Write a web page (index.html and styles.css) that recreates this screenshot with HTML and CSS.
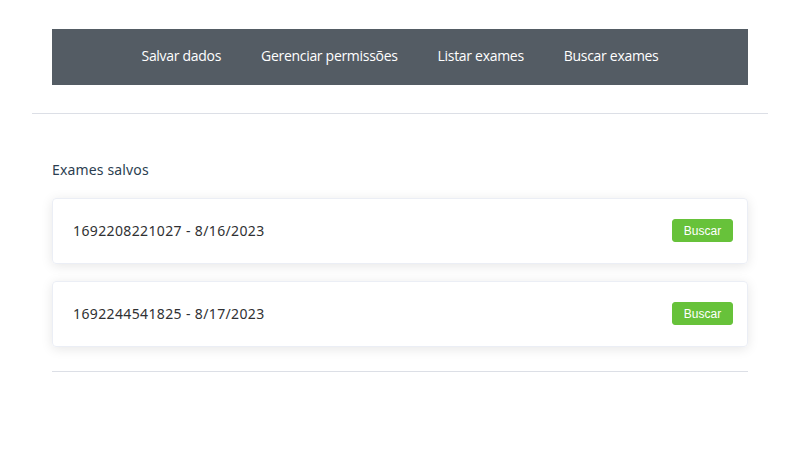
FILE: index.html
```html
<!DOCTYPE html>
<html lang="pt">
<head>
<meta charset="utf-8">
<title>Exames</title>
<link rel="stylesheet" href="styles.css">
</head>
<body>
<div class="page">
  <header class="header">
    <nav class="nav">
      <a class="nav-item">Salvar dados</a>
      <a class="nav-item">Gerenciar permissões</a>
      <a class="nav-item">Listar exames</a>
      <a class="nav-item">Buscar exames</a>
    </nav>
  </header>
  <hr class="divider">
  <main class="main">
    <h2 class="title">Exames salvos</h2>
    <div class="list">
      <div class="card">
        <span class="card-text">1692208221027 - 8/16/2023</span>
        <button class="btn">Buscar</button>
      </div>
      <div class="card">
        <span class="card-text">1692244541825 - 8/17/2023</span>
        <button class="btn">Buscar</button>
      </div>
    </div>
    <hr class="divider-bottom">
  </main>
</div>
</body>
</html>
```
FILE: styles.css
```css
html, body {
  margin: 0;
  padding: 0;
  background: #ffffff;
}
body {
  font-family: "Noto Sans", sans-serif;
  color: #303133;
}
.page {
  padding: 29px 32px 0;
}
.header {
  padding: 0 20px;
}
.nav {
  height: 56px;
  box-sizing: border-box;
  padding-bottom: 3px;
  background: #545c64;
  display: flex;
  justify-content: center;
  align-items: center;
  gap: 40px;
}
.nav-item {
  color: #ffffff;
  font-family: "Open Sans", sans-serif;
  font-size: 14px;
  letter-spacing: -0.3px;
}
.divider {
  border: 0;
  border-top: 1px solid #dcdfe6;
  margin: 28px 0 0;
}
.main {
  padding: 0 20px;
}
.title {
  margin: 46px 0 0;
  font-size: 14px;
  font-weight: 400;
  color: #2c3e50;
  line-height: 20px;
  letter-spacing: 0.15px;
}
.list {
  margin-top: 18px;
  display: flex;
  flex-direction: column;
  gap: 17px;
}
.card {
  height: 64px;
  box-sizing: content-box;
  border: 1px solid #ebeef5;
  border-radius: 4px;
  box-shadow: 0 2px 12px 0 rgba(0, 0, 0, 0.1);
  display: flex;
  align-items: center;
  justify-content: space-between;
  padding: 0 14px 0 20px;
}
.card-text {
  font-size: 14px;
  color: #303133;
  letter-spacing: 0.37px;
  padding-bottom: 2px;
}
.btn {
  background: #67c23a;
  border: 1px solid #67c23a;
  color: #fff;
  border-radius: 3px;
  font-family: "Liberation Sans", Arial, sans-serif;
  font-size: 12px;
  width: 61px;
  height: 23px;
  padding: 0;
  margin-top: -1px;
}
.divider-bottom {
  border: 0;
  border-top: 1px solid #dcdfe6;
  margin: 24px 0 0;
}
```
